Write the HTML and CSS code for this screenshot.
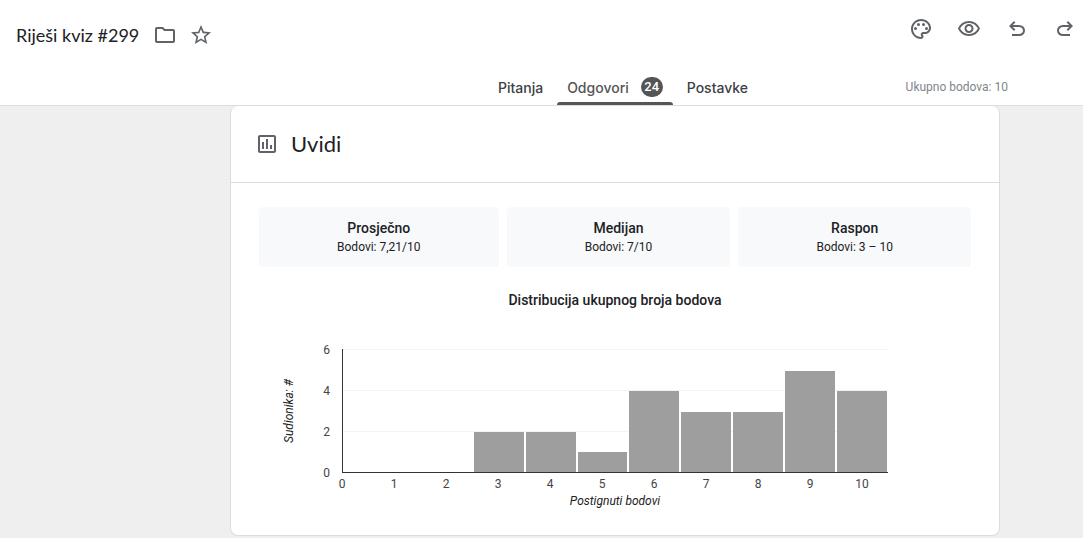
FILE: index.html
```html
<!DOCTYPE html>
<html lang="hr">

<head>
  <meta charset="UTF-8">
  <meta name="viewport" content="width=device-width, initial-scale=1.0">
  <title>Riješi kviz #299</title>
  <link rel="stylesheet" href="styles.css">
</head>

<body>
  <header class="header">
    <div class="toolbar">
      <div class="doc">
        <h1 class="doc-title">Riješi kviz #299</h1>
        <button class="icon-btn" type="button" aria-label="Premjesti">
          <svg viewBox="0 0 24 24"><path d="M9.17 6l2 2H20v10H4V6h5.17M10 4H4c-1.1 0-1.99.9-1.99 2L2 18c0 1.1.9 2 2 2h16c1.1 0 2-.9 2-2V8c0-1.1-.9-2-2-2h-8l-2-2z"/></svg>
        </button>
        <button class="icon-btn" type="button" aria-label="Zvjezdica">
          <svg viewBox="0 0 24 24"><path d="M22 9.24l-7.19-.62L12 2 9.19 8.63 2 9.24l5.46 4.73L5.82 21 12 17.27 18.18 21l-1.63-7.03L22 9.24zM12 15.4l-3.76 2.27 1-4.28-3.32-2.88 4.38-.38L12 6.1l1.71 4.04 4.38.38-3.32 2.88 1 4.28L12 15.4z"/></svg>
        </button>
      </div>
      <div class="actions">
        <button class="icon-btn" type="button" aria-label="Prilagodi temu">
          <svg viewBox="0 0 24 24"><path d="M12 22C6.49 22 2 17.51 2 12S6.49 2 12 2s10 4.04 10 9c0 3.31-2.69 6-6 6h-1.77c-.28 0-.5.22-.5.5 0 .12.05.23.13.33.41.47.64 1.06.64 1.67 0 1.38-1.12 2.5-2.5 2.5zm0-18c-4.41 0-8 3.59-8 8s3.59 8 8 8c.28 0 .5-.22.5-.5 0-.16-.08-.28-.14-.35-.41-.46-.63-1.05-.63-1.65 0-1.38 1.12-2.5 2.5-2.5H16c2.21 0 4-1.79 4-4 0-3.86-3.59-7-8-7z"/><circle cx="6.5" cy="11.5" r="1.5"/><circle cx="9.5" cy="7.5" r="1.5"/><circle cx="14.5" cy="7.5" r="1.5"/><circle cx="17.5" cy="11.5" r="1.5"/></svg>
        </button>
        <button class="icon-btn" type="button" aria-label="Pregled">
          <svg viewBox="0 0 24 24"><path d="M12 6c3.79 0 7.17 2.13 8.82 5.5C19.17 14.87 15.79 17 12 17s-7.17-2.13-8.82-5.5C4.83 8.13 8.21 6 12 6m0-2C7 4 2.73 7.11 1 11.5 2.73 15.89 7 19 12 19s9.27-3.11 11-7.5C21.27 7.11 17 4 12 4zm0 5c1.38 0 2.5 1.12 2.5 2.5S13.38 14 12 14s-2.5-1.12-2.5-2.5S10.62 9 12 9m0-2c-2.48 0-4.5 2.02-4.5 4.5S9.52 16 12 16s4.5-2.02 4.5-4.5S14.48 7 12 7z"/></svg>
        </button>
        <button class="icon-btn" type="button" aria-label="Poništi">
          <svg viewBox="0 0 24 24"><path d="M7 19v-2h7.1q1.575 0 2.738-1T18 13.5 16.838 11 14.1 10H7.8l2.6 2.6L9 14 4 9l5-5 1.4 1.4L7.8 8h6.3q2.425 0 4.163 1.575T20 13.5t-1.737 3.925T14.1 19z"/></svg>
        </button>
        <button class="icon-btn" type="button" aria-label="Ponovi">
          <svg viewBox="0 0 24 24"><path d="M17 19v-2H9.9q-1.575 0-2.738-1T6 13.5 7.162 11 9.9 10h6.3l-2.6 2.6L15 14l5-5-5-5-1.4 1.4L16.2 8H9.9Q7.475 8 5.737 9.575T4 13.5t1.737 3.925T9.9 19z"/></svg>
        </button>
      </div>
    </div>
    <div class="tabbar">
      <nav class="tabs">
        <a class="tab" href="#pitanja">Pitanja</a>
        <a class="tab active" href="#odgovori">Odgovori <span class="badge">24</span></a>
        <a class="tab" href="#postavke">Postavke</a>
      </nav>
      <span class="total">Ukupno bodova: 10</span>
    </div>
  </header>

  <main class="content">
    <section class="card">
      <div class="card-header">
        <svg class="card-icon" viewBox="0 0 24 24"><path d="M19 3H5c-1.1 0-2 .9-2 2v14c0 1.1.9 2 2 2h14c1.1 0 2-.9 2-2V5c0-1.1-.9-2-2-2zm0 16H5V5h14v14zM7 10h2v7H7zm4-3h2v10h-2zm4 6h2v4h-2z"/></svg>
        <h2 class="card-title">Uvidi</h2>
      </div>
      <div class="card-body">
        <div class="stats">
          <div class="stat">
            <h3 class="stat-name">Prosječno</h3>
            <p class="stat-value">Bodovi: 7,21/10</p>
          </div>
          <div class="stat">
            <h3 class="stat-name">Medijan</h3>
            <p class="stat-value">Bodovi: 7/10</p>
          </div>
          <div class="stat">
            <h3 class="stat-name">Raspon</h3>
            <p class="stat-value">Bodovi: 3 – 10</p>
          </div>
        </div>

        <h3 class="chart-title">Distribucija ukupnog broja bodova</h3>
        <div class="chart">
          <div class="y-title">Sudionika: #</div>
          <div class="y-labels">
            <span>6</span>
            <span>4</span>
            <span>2</span>
            <span>0</span>
          </div>
          <div class="plot">
            <div class="bars">
              <div class="bar" style="height: 0%"></div>
              <div class="bar" style="height: 0%"></div>
              <div class="bar" style="height: 0%"></div>
              <div class="bar" style="height: 33.33%"></div>
              <div class="bar" style="height: 33.33%"></div>
              <div class="bar" style="height: 16.67%"></div>
              <div class="bar" style="height: 66.67%"></div>
              <div class="bar" style="height: 50%"></div>
              <div class="bar" style="height: 50%"></div>
              <div class="bar" style="height: 83.33%"></div>
              <div class="bar" style="height: 66.67%"></div>
            </div>
          </div>
          <div class="x-axis">
            <div class="x-labels">
              <span>0</span>
              <span>1</span>
              <span>2</span>
              <span>3</span>
              <span>4</span>
              <span>5</span>
              <span>6</span>
              <span>7</span>
              <span>8</span>
              <span>9</span>
              <span>10</span>
            </div>
            <div class="x-title">Postignuti bodovi</div>
          </div>
        </div>
      </div>
    </section>
  </main>
</body>

</html>
```
FILE: styles.css
```css
* {
  box-sizing: border-box;
}

body {
  margin: 0;
  background: #efefef;
  color: #202124;
  font-family: Roboto, "Liberation Sans", sans-serif;
}

h1, h2, h3, p {
  margin: 0;
}

.header {
  background: #fff;
  border-bottom: 1px solid #dadce0;
}

.toolbar {
  display: flex;
  justify-content: space-between;
  align-items: flex-start;
  padding: 11px 0 10px 16px;
}

.doc {
  display: flex;
  align-items: center;
  height: 48px;
}

.doc-title {
  margin-right: 8px;
  font-family: Lato, sans-serif;
  font-size: 18px;
  font-weight: 400;
  line-height: 24px;
}

.actions {
  display: flex;
  gap: 12px;
}

.icon-btn {
  display: flex;
  align-items: center;
  justify-content: center;
  width: 36px;
  height: 36px;
  padding: 0;
  border: 0;
  border-radius: 50%;
  background: none;
  cursor: pointer;
}

.icon-btn:hover {
  background: #f1f3f4;
}

.icon-btn svg,
.card-icon {
  width: 24px;
  height: 24px;
  fill: #5f6368;
}

.tabbar {
  display: grid;
  grid-template-columns: 1fr auto 1fr;
  height: 36px;
  padding-left: 163px;
}

.tabs {
  display: flex;
  grid-column: 2;
  gap: 4px;
}

.tab {
  display: flex;
  align-items: center;
  padding: 0 10px;
  color: #3c4043;
  font-family: Inter, sans-serif;
  font-size: 14px;
  font-weight: 500;
  text-decoration: none;
}

.tab.active {
  position: relative;
  color: #555;
}

.tab.active::after {
  content: "";
  position: absolute;
  left: 0;
  right: 0;
  bottom: 0;
  height: 3px;
  border-radius: 3px 3px 0 0;
  background: #555;
}

.badge {
  margin-left: 12px;
  width: 22px;
  border-radius: 10px;
  background: #555;
  color: #fff;
  font-family: Roboto, sans-serif;
  font-size: 13px;
  font-weight: 500;
  line-height: 20px;
  text-align: center;
}

.total {
  justify-self: end;
  align-self: center;
  margin-right: 75px;
  color: #80868b;
  font-size: 12px;
}

.content {
  padding-left: 147px;
}

.card {
  max-width: 770px;
  margin: 0 auto;
  border: 1px solid #dadce0;
  border-top: 0;
  border-radius: 8px;
  background: #fff;
}

.card-header {
  display: flex;
  align-items: center;
  gap: 12px;
  height: 77px;
  padding: 0 24px;
  border-bottom: 1px solid #dadce0;
}

.card-title {
  font-family: Lato, sans-serif;
  font-size: 22px;
  font-weight: 400;
  line-height: 26px;
}

.card-body {
  padding: 24px 28px 27px;
}

.stats {
  display: flex;
  gap: 8px;
}

.stat {
  flex: 1 1 auto;
  padding: 11px 8px;
  border-radius: 4px;
  background: #f8f9fa;
  text-align: center;
}

.stat-name,
.chart-title {
  font-size: 14px;
  font-weight: 500;
  line-height: 20px;
}

.stat-value {
  font-size: 12px;
  line-height: 18px;
}

.chart-title {
  margin: 23px 0 39px;
  text-align: center;
}

.chart {
  display: grid;
  grid-template-columns: 14px 22px 1fr;
  padding: 0 83px 0 23px;
  column-gap: 12px;
  font-size: 12px;
  line-height: 14px;
}

.y-title {
  writing-mode: vertical-rl;
  transform: rotate(180deg);
  font-style: italic;
  line-height: 14px;
  text-align: center;
}

.y-labels {
  display: flex;
  flex-direction: column;
  justify-content: space-between;
  margin: -6px 0 -7px;
  color: #444;
  text-align: right;
}

.plot {
  height: 124px;
  padding-top: 2px;
  border-left: 1px solid #333;
  border-bottom: 1px solid #333;
  background: linear-gradient(#f3f3f3 1px, transparent 1px) 0 0 / 100% 41px;
  overflow: hidden;
}

/* the first bin is centred on the axis, so the row starts half a bin early */
.bars,
.x-labels {
  display: grid;
  grid-template-columns: repeat(11, 1fr);
  margin-left: calc(-100% / 21);
}

.bars {
  align-items: end;
  height: 100%;
}

.bar {
  margin: 0 1px;
  background: #9e9e9e;
}

.x-axis {
  grid-column: 3;
  padding-top: 4px;
}

.x-labels {
  color: #444;
  text-align: center;
}

.x-title {
  margin-top: 3px;
  font-style: italic;
  text-align: center;
}
```
